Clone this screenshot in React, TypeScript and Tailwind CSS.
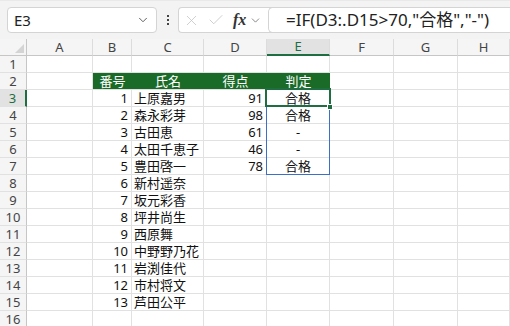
import { ChevronDown, X, Check } from 'lucide-react'

const cols = ['A', 'B', 'C', 'D', 'E', 'F', 'G', 'H']

const people = [
  { no: 1, name: '上原嘉男', score: '91', result: '合格' },
  { no: 2, name: '森永彩芽', score: '98', result: '合格' },
  { no: 3, name: '古田恵', score: '61', result: '-' },
  { no: 4, name: '太田千恵子', score: '46', result: '-' },
  { no: 5, name: '豊田啓一', score: '78', result: '合格' },
  { no: 6, name: '新村遥奈', score: '', result: '' },
  { no: 7, name: '坂元彩香', score: '', result: '' },
  { no: 8, name: '坪井尚生', score: '', result: '' },
  { no: 9, name: '西原舞', score: '', result: '' },
  { no: 10, name: '中野野乃花', score: '', result: '' },
  { no: 11, name: '岩渕佳代', score: '', result: '' },
  { no: 12, name: '市村将文', score: '', result: '' },
  { no: 13, name: '芦田公平', score: '', result: '' },
]

const cell = 'h-[17px] border-r border-b border-[#e1e1e1] overflow-hidden whitespace-nowrap leading-[16px]'
const rowHead =
  'h-[17px] border-r border-b border-r-[#c6c6c6] border-b-[#e1e1e1] bg-[#f5f5f5] text-center text-[13px] leading-[16px] text-[#444]'
const head = 'h-[17px] bg-[#1b6b28] text-white text-center border-b border-[#e1e1e1] leading-[16px]'

function Toolbar() {
  return (
    <div className="h-[39px] bg-[#f3f3f3] border-t border-[#e9e9e9] flex items-start pt-[6px] pl-[7px]">
      {/* name box */}
      <div className="w-[150px] h-[26px] bg-white border border-[#d4d4d4] rounded-[4px] flex items-center pl-[6px] pr-[6px]">
        <span className="text-[15px] text-[#222] flex-1">E3</span>
        <ChevronDown size={14} strokeWidth={1.6} className="text-[#555]" />
      </div>
      {/* vertical dots */}
      <div className="w-[21px] h-[26px] flex flex-col items-center justify-center gap-[2px]">
        <span className="w-[2px] h-[2px] bg-[#444]" />
        <span className="w-[2px] h-[2px] bg-[#444]" />
        <span className="w-[2px] h-[2px] bg-[#444]" />
      </div>
      {/* formula bar */}
      <div className="flex-1 h-[26px] bg-white border border-r-0 border-[#d4d4d4] rounded-l-[4px] flex items-center">
        <div className="w-[89px] flex items-center pl-[4px] gap-[7px]">
          <X size={17} strokeWidth={1.1} className="text-[#c4c4c4]" />
          <Check size={18} strokeWidth={1.1} className="text-[#c4c4c4]" />
          <span className="font-['Liberation_Serif',serif] italic font-bold text-[16px] text-[#333] ml-[1px]">
            fx
          </span>
          <ChevronDown size={13} strokeWidth={1.6} className="text-[#777] -ml-[4px]" />
        </div>
        <div className="flex-1 h-[26px] -my-px border border-r-0 border-[#d4d4d4] rounded-l-[5px] flex items-center pl-[17px]">
          <span className="text-[17px] text-[#222] font-['Noto_Sans','Noto_Sans_CJK_JP',sans-serif]">
            =IF(D3:.D15&gt;70,"合格","-")
          </span>
        </div>
      </div>
    </div>
  )
}

export default function App() {
  return (
    <div className="w-[510px] h-[326px] overflow-hidden bg-white font-['Noto_Sans','Noto_Sans_CJK_JP',sans-serif] relative">
      <Toolbar />
      <div className="grid grid-cols-[27px_66px_39px_72px_63px_63px_64px_64px_1fr] text-[13px] text-[#111]">
        {/* column headers */}
        <div className="h-[17px] bg-[#f5f5f5] border-r border-b border-[#c6c6c6] relative">
          <svg width="9" height="9" className="absolute right-[2px] bottom-[2px]">
            <polygon points="9,0 9,9 0,9" fill="#d4d4d4" />
          </svg>
        </div>
        {cols.map((c) =>
          c === 'E' ? (
            <div
              key={c}
              className="h-[17px] bg-[#e2e2e2] border-r border-[#dcdcdc] border-b-2 border-b-[#1e6e41] text-center text-[13px] leading-[15px] text-[#1e6e41]"
            >
              {c}
            </div>
          ) : (
            <div
              key={c}
              className="h-[17px] bg-[#f5f5f5] border-r border-[#dcdcdc] border-b border-b-[#c6c6c6] text-center text-[13px] leading-[16px] text-[#444]"
            >
              {c}
            </div>
          )
        )}

        {/* row 1 */}
        <div className={rowHead}>1</div>
        {cols.map((c) => (
          <div key={c} className={cell} />
        ))}

        {/* row 2: table header */}
        <div className={rowHead}>2</div>
        <div className={cell} />
        <div className={head}>番号</div>
        <div className={head}>氏名</div>
        <div className={head}>得点</div>
        <div className={head}>判定</div>
        <div className={cell} />
        <div className={cell} />
        <div className={cell} />

        {/* data rows */}
        {people.map((p, i) => (
          <div key={p.no} className="contents">
            <div
              className={
                i === 0
                  ? 'h-[17px] border-b border-b-[#e1e1e1] border-r-2 border-r-[#1e6e41] bg-[#e2e2e2] text-center text-[13px] leading-[16px] text-[#1e6e41]'
                  : rowHead
              }
            >
              {i + 3}
            </div>
            <div className={cell} />
            <div className={`${cell} text-right pr-[3px]`}>{p.no}</div>
            <div className={`${cell} pl-[2px]`}>{p.name}</div>
            <div className={`${cell} text-right pr-[3px]`}>{p.score}</div>
            <div className={`${cell} text-center`}>{p.result}</div>
            <div className={cell} />
            <div className={cell} />
            <div className={cell} />
          </div>
        ))}

        {/* row 16 */}
        <div className={rowHead}>16</div>
        {cols.map((c) => (
          <div key={c} className={cell} />
        ))}
      </div>

      {/* spill range outline E3:E7 */}
      <div className="absolute left-[266px] top-[89px] w-[64px] h-[86px] border border-[#3d6fc6] pointer-events-none" />
      {/* active cell E3 */}
      <div className="absolute left-[265px] top-[88px] w-[66px] h-[19px] border-2 border-[#1e6e41] pointer-events-none" />
      {/* fill handle */}
      <div className="absolute left-[327px] top-[104px] w-[6px] h-[6px] bg-[#1e6e41] border border-white pointer-events-none" />
    </div>
  )
}
